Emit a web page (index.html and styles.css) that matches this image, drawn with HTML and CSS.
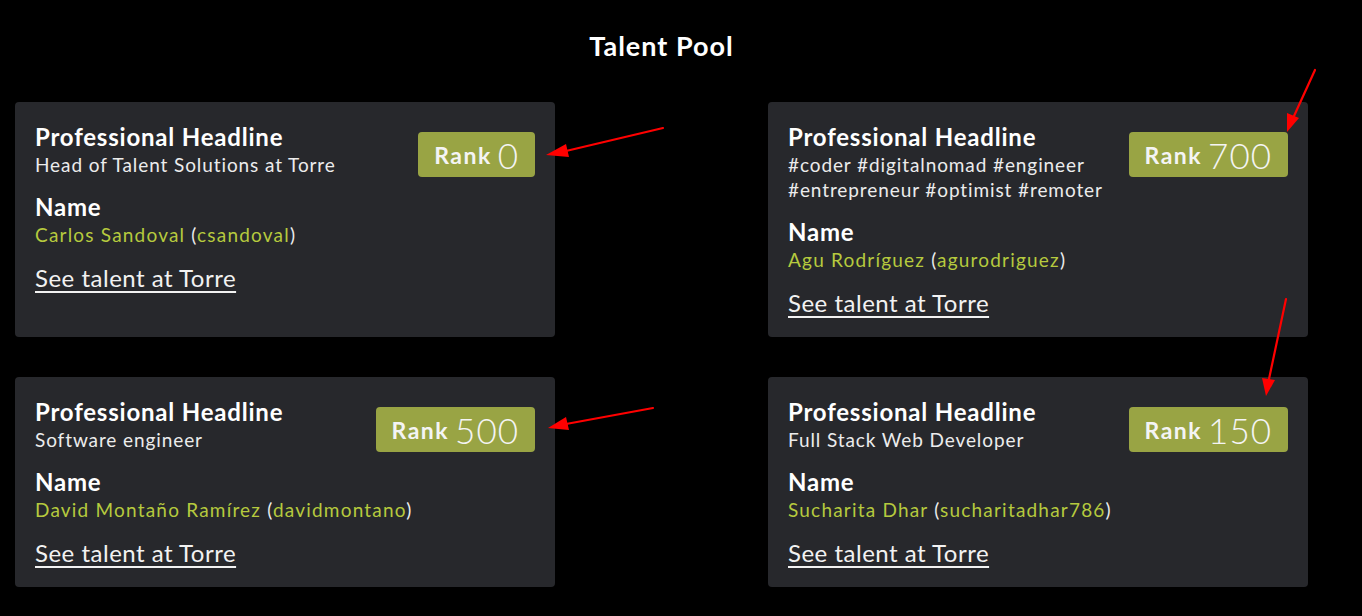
FILE: index.html
```html
<!DOCTYPE html>
<html lang="en">
<head>
<meta charset="utf-8">
<title>Talent Pool</title>
<link rel="stylesheet" href="styles.css">
</head>
<body>
<main class="page">
  <h1 class="title">Talent Pool</h1>
  <section class="grid">
    <article class="card">
      <div class="head">
        <h2 class="label">Professional Headline</h2>
        <p class="headline">Head of Talent Solutions at Torre</p>
      </div>
      <div class="badge"><span class="rank">Rank</span><span class="num">0</span></div>
      <div class="rest">
        <h2 class="label label-name">Name</h2>
        <p class="name"><span class="hl">Carlos Sandoval</span> (<span class="hl">csandoval</span>)</p>
        <a class="link" href="#">See talent at Torre</a>
      </div>
    </article>
    <article class="card">
      <div class="head">
        <h2 class="label">Professional Headline</h2>
        <p class="headline">#coder #digitalnomad #engineer<br>#entrepreneur #optimist #remoter</p>
      </div>
      <div class="badge"><span class="rank">Rank</span><span class="num">700</span></div>
      <div class="rest">
        <h2 class="label label-name">Name</h2>
        <p class="name"><span class="hl">Agu Rodríguez</span> (<span class="hl">agurodriguez</span>)</p>
        <a class="link" href="#">See talent at Torre</a>
      </div>
    </article>
    <article class="card">
      <div class="head">
        <h2 class="label">Professional Headline</h2>
        <p class="headline">Software engineer</p>
      </div>
      <div class="badge"><span class="rank">Rank</span><span class="num">500</span></div>
      <div class="rest">
        <h2 class="label label-name">Name</h2>
        <p class="name"><span class="hl">David Montaño Ramírez</span> (<span class="hl">davidmontano</span>)</p>
        <a class="link" href="#">See talent at Torre</a>
      </div>
    </article>
    <article class="card">
      <div class="head">
        <h2 class="label">Professional Headline</h2>
        <p class="headline">Full Stack Web Developer</p>
      </div>
      <div class="badge"><span class="rank">Rank</span><span class="num">150</span></div>
      <div class="rest">
        <h2 class="label label-name">Name</h2>
        <p class="name"><span class="hl">Sucharita Dhar</span> (<span class="hl">sucharitadhar786</span>)</p>
        <a class="link" href="#">See talent at Torre</a>
      </div>
    </article>
  </section>
  <svg class="arrows" width="1362" height="616" viewBox="0 0 1362 616" aria-hidden="true">
    <g stroke="#ff0000" stroke-width="2.2" stroke-linecap="round">
      <line x1="663" y1="128" x2="566" y2="151"/>
      <line x1="653" y1="408" x2="566" y2="424"/>
      <line x1="1315" y1="70" x2="1294" y2="116"/>
      <line x1="1286" y1="299" x2="1269" y2="379"/>
    </g>
    <g fill="#ff0000">
      <polygon points="546,155 566,144 569,157"/>
      <polygon points="548,428 566,417 569,430"/>
      <polygon points="1287,132 1287,113 1299,118"/>
      <polygon points="1266,396 1262,378 1275,380"/>
    </g>
  </svg>
</main>
</body>
</html>
```

FILE: styles.css
```css
html, body {
  margin: 0;
  padding: 0;
  background: #000;
}

body {
  font-family: Lato, "Noto Sans", sans-serif;
  color: #ececec;
}

.page {
  position: relative;
  width: 1362px;
  height: 616px;
  box-sizing: border-box;
  padding: 0 54px 0 15px;
}

.title {
  margin: 0;
  padding-top: 31px;
  height: 30px;
  line-height: 30px;
  font-size: 27px;
  font-weight: 700;
  letter-spacing: 1px;
  text-align: center;
  color: #fff;
  margin-bottom: 41px;
}

.grid {
  display: grid;
  grid-template-columns: 540px 540px;
  justify-content: space-between;
  row-gap: 40px;
}

.card {
  background: #27282c;
  border-radius: 4px;
  padding: 20px 20px 19px;
  display: grid;
  grid-template-columns: 1fr auto;
  align-content: start;
  align-items: start;
}

.rest {
  grid-column: 1 / -1;
  display: flex;
  flex-direction: column;
  align-items: flex-start;
}

.label {
  margin: 0;
  font-size: 24px;
  line-height: 30px;
  font-weight: 700;
  letter-spacing: 0.8px;
  color: #fff;
}

.label-name {
  margin-top: 15px;
}

.headline,
.name {
  margin: 0;
  font-size: 19px;
  line-height: 25px;
  letter-spacing: 0.9px;
  color: #ececec;
  white-space: nowrap;
}

.name {
  letter-spacing: 1.2px;
}

.hl {
  color: #b6ca3e;
}

.link {
  margin-top: 16px;
  font-size: 24px;
  line-height: 30px;
  letter-spacing: 0.5px;
  color: #f2f2f2;
  text-decoration: underline;
  text-underline-offset: 4px;
  text-decoration-thickness: 2px;
}

.badge {
  margin-top: 10px;
  height: 45px;
  box-sizing: border-box;
  padding: 0 16px;
  background: #99a444;
  border-radius: 4px;
  display: flex;
  align-items: center;
  gap: 6px;
  color: #f4f4f4;
}

.rank {
  font-size: 23px;
  font-weight: 700;
  letter-spacing: 1.5px;
}

.num {
  font-size: 35px;
  font-weight: 300;
  letter-spacing: 1px;
}

.arrows {
  position: absolute;
  left: 0;
  top: 0;
  pointer-events: none;
}
```
